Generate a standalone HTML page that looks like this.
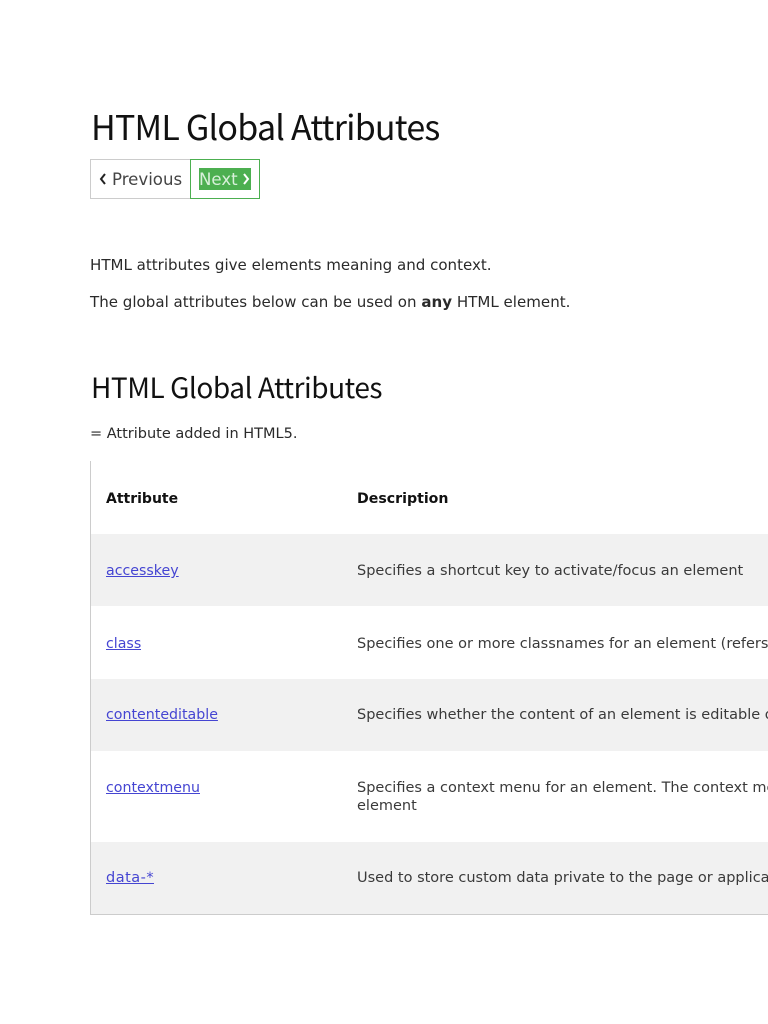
<!DOCTYPE html>
<html><head><meta charset="utf-8"><style>
html,body{margin:0;padding:0;background:#fff;width:768px;height:1024px;overflow:hidden}
body{position:relative;font-family:"DejaVu Sans",sans-serif;color:#000}
#w{position:absolute;left:0;top:0;width:768px;height:1024px;overflow:hidden}
.t{position:absolute;white-space:nowrap;line-height:20px}
.h{font-family:"Noto Sans CJK JP","DejaVu Sans",sans-serif;font-weight:400;color:#111}
.b{font-size:15.05px;color:#2a2a2a}
.c{font-size:14.5px;color:#3a3a3a;max-width:411px;overflow:hidden}
a{color:#4545d2;text-decoration:underline;font-size:14.2px}
.r{position:absolute;left:91px;width:677px}
</style></head><body><div id="w">
<div class="t h" style="left:91px;top:106px;font-size:34px;line-height:40px;letter-spacing:-.78px">HTML Global Attributes</div>
<div style="position:absolute;left:90px;top:159px;width:100px;height:38px;border:1px solid #ccc;border-right:0"></div>
<div style="position:absolute;left:190px;top:159px;width:68px;height:38px;border:1px solid #4CAF50"></div>
<div style="position:absolute;left:199px;top:168px;width:52px;height:22px;background:#4CAF50"></div>
<svg style="position:absolute;left:98px;top:172px" width="10" height="14" viewBox="0 0 10 14"><path d="M7 2L3 7l4 5" fill="none" stroke="#222" stroke-width="2"/></svg>
<div class="t" style="left:112px;top:170px;font-size:16.6px;color:#444">Previous</div>
<div class="t" style="left:199px;top:170px;font-size:16.6px;color:#d8f0da">Next</div>
<svg style="position:absolute;left:241px;top:172px" width="10" height="14" viewBox="0 0 10 14"><path d="M3 2l4 5-4 5" fill="none" stroke="#fff" stroke-width="2"/></svg>
<div class="t b" style="left:90px;top:255px">HTML attributes give elements meaning and context.</div>
<div class="t b" style="left:90px;top:292px;letter-spacing:.01px">The global attributes below can be used on <b>any</b> HTML element.</div>
<div class="t h" style="left:91px;top:367px;font-size:28px;line-height:40px;letter-spacing:-.46px">HTML Global Attributes</div>
<div class="t b" style="left:90px;top:424px;font-size:14.5px">= Attribute added in HTML5.</div>

<div style="position:absolute;left:90px;top:461px;width:1px;height:454px;background:#ccc"></div>
<div class="r" style="top:534px;height:72px;background:#f1f1f1"></div>
<div class="r" style="top:679px;height:72px;background:#f1f1f1"></div>
<div class="r" style="top:842px;height:72px;background:#f1f1f1"></div>
<div style="position:absolute;left:90px;top:914px;width:678px;height:1px;background:#ccc"></div>

<div class="t" style="left:106px;top:489px;font-size:14px;font-weight:bold;color:#111">Attribute</div>
<div class="t" style="left:357px;top:489px;font-size:14.15px;font-weight:bold;color:#111">Description</div>

<div class="t c" style="left:106px;top:561px"><a>accesskey</a></div>
<div class="t c" style="left:357px;top:561px">Specifies a shortcut key to activate/focus an element</div>
<div class="t c" style="left:106px;top:634px"><a>class</a></div>
<div class="t c" style="left:357px;top:634px">Specifies one or more classnames for an element (refers to a class in a style sheet)</div>
<div class="t c" style="left:106px;top:705px"><a>contenteditable</a></div>
<div class="t c" style="left:357px;top:705px">Specifies whether the content of an element is editable or not</div>
<div class="t c" style="left:106px;top:778px"><a>contextmenu</a></div>
<div class="t c" style="left:357px;top:778px">Specifies a context menu for an element. The context menu appears when a user right-clicks on the</div>
<div class="t c" style="left:357px;top:796px">element</div>
<div class="t c" style="left:106px;top:868px"><a style="font-size:14.5px;letter-spacing:.5px">data-*</a></div>
<div class="t c" style="left:357px;top:868px">Used to store custom data private to the page or application</div>
</div></body></html>
